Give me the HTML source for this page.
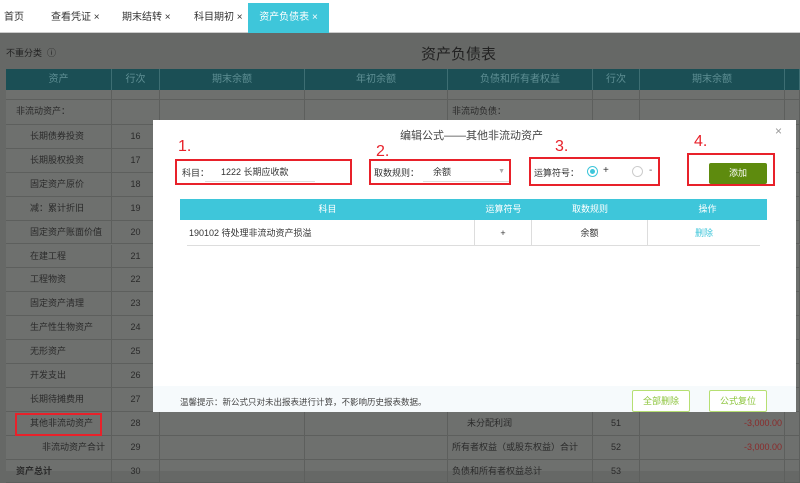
<!DOCTYPE html>
<html><head><meta charset="utf-8"><style>
*{margin:0;padding:0;box-sizing:border-box}
body{width:800px;height:471px;overflow:hidden;position:relative;background:#666866;font-family:"Liberation Sans","Noto Sans CJK SC",sans-serif;font-size:9px;color:#222}
.a{position:absolute}
.tabs{left:0;top:0;width:800px;height:33px;background:#fff;border-bottom:1px solid #ccc}
.tab{position:absolute;top:3px;height:30px;line-height:30px;font-size:10px;color:#333}
.cell{position:absolute;border-right:1px solid #5d5f5d;border-bottom:1px solid #5d5f5d;line-height:23px;font-size:9px;color:#2a2a2a;white-space:nowrap;overflow:hidden}
.hd{position:absolute;top:69px;height:21px;line-height:21px;background:#1b4f55;color:#5f8f94;text-align:center;font-size:10px;border-right:1px solid #3d6e73}
.modal{left:153px;top:120px;width:643px;height:292px;background:#fff}
.red{position:absolute;border:2px solid #e8212a}
.num{position:absolute;color:#e8212a;font-size:16px}
.ith{position:absolute;top:199px;height:21px;line-height:21px;background:#3ec6da;color:#fff;text-align:center;font-size:9px}
.itd{position:absolute;top:220px;height:26px;line-height:26px;border-bottom:1px solid #ddd;border-right:1px solid #ddd;font-size:9px;text-align:center;color:#333}
.btn{position:absolute;top:390px;height:22px;line-height:20px;border:1px solid #b6df72;color:#8cc43c;text-align:center;font-size:9px;border-radius:2px;background:#fff}
</style></head><body>
<div class="a tabs">
<div class="tab" style="left:4px">首页</div>
<div class="tab" style="left:51px">查看凭证 ×</div>
<div class="tab" style="left:122px">期末结转 ×</div>
<div class="tab" style="left:194px">科目期初 ×</div>
<div class="tab" style="left:248px;width:81px;background:#3ec6da;color:#fff;text-align:center;top:3px">资产负债表 ×</div>
</div>
<div class="a" style="left:6px;top:46px;font-size:9px;color:#222">不重分类 &nbsp;ⓘ</div>
<div class="a" style="left:421px;top:43px;font-size:15px;color:#222">资产负债表</div>
<div class="hd" style="left:6px;width:106px">资产</div>
<div class="hd" style="left:112px;width:48px">行次</div>
<div class="hd" style="left:160px;width:145px">期末余额</div>
<div class="hd" style="left:305px;width:143px">年初余额</div>
<div class="hd" style="left:448px;width:145px">负债和所有者权益</div>
<div class="hd" style="left:593px;width:47px">行次</div>
<div class="hd" style="left:640px;width:145px">期末余额</div>
<div class="hd" style="left:785px;width:15px"></div>
<div class="a" style="left:6px;top:90px;width:794px;height:381px;background:#6e706e"></div>
<div id="rows"></div>
<script>
var L=[["",""],["非流动资产：",""],["长期债券投资","16"],["长期股权投资","17"],["固定资产原价","18"],["减：累计折旧","19"],["固定资产账面价值","20"],["在建工程","21"],["工程物资","22"],["固定资产清理","23"],["生产性生物资产","24"],["无形资产","25"],["开发支出","26"],["长期待摊费用","27"],["其他非流动资产","28"],["非流动资产合计","29"],["资产总计","30"]];
var h=23.9,y=125,ys=[90,100],hs=[10,25];for(var i=2;i<L.length;i++){ys.push(y);hs.push(h);y+=h}
var s="";
for(i=0;i<L.length;i++){var t=ys[i],hh=hs[i];var ind=(i==1)?10:(i==15?36:(i==16?10:24));
s+='<div class="cell" style="left:6px;top:'+t+'px;width:106px;height:'+hh+'px;padding-left:'+ind+'px;'+(i==16?'font-weight:bold;':'')+'">'+L[i][0]+'</div>';
s+='<div class="cell" style="left:112px;top:'+t+'px;width:48px;height:'+hh+'px;text-align:center">'+L[i][1]+'</div>';
s+='<div class="cell" style="left:160px;top:'+t+'px;width:145px;height:'+hh+'px"></div>';
s+='<div class="cell" style="left:305px;top:'+t+'px;width:143px;height:'+hh+'px"></div>';
var rl="",rn="",rv="";
if(i==1)rl="非流动负债：";if(i==14){rl="&nbsp;&nbsp;&nbsp;&nbsp;&nbsp;&nbsp;未分配利润";rn="51";rv="-3,000.00"}
if(i==15){rl="所有者权益（或股东权益）合计";rn="52";rv="-3,000.00"}
if(i==16){rl="负债和所有者权益总计";rn="53"}
s+='<div class="cell" style="left:448px;top:'+t+'px;width:145px;height:'+hh+'px;padding-left:4px">'+rl+'</div>';
s+='<div class="cell" style="left:593px;top:'+t+'px;width:47px;height:'+hh+'px;text-align:center">'+rn+'</div>';
s+='<div class="cell" style="left:640px;top:'+t+'px;width:145px;height:'+hh+'px;text-align:right;padding-right:2px;color:#8a2a2a">'+rv+'</div>';
s+='<div class="cell" style="left:785px;top:'+t+'px;width:15px;height:'+hh+'px"></div>';}
document.getElementById("rows").innerHTML=s;
</script>
<div class="red" style="left:15px;top:413px;width:87px;height:23px"></div>
<div class="a modal"></div>
<div class="a" style="left:153px;top:386px;width:643px;height:26px;background:#f6fafc"></div>
<div class="a" style="left:400px;top:127px;font-size:11px;color:#444">编辑公式——其他非流动资产</div>
<div class="a" style="left:775px;top:124px;font-size:12px;color:#999">×</div>
<div class="num" style="left:178px;top:138px">1.</div>
<div class="num" style="left:376px;top:143px">2.</div>
<div class="num" style="left:555px;top:138px">3.</div>
<div class="num" style="left:694px;top:133px">4.</div>
<div class="red" style="left:175px;top:159px;width:177px;height:26px"></div>
<div class="a" style="left:182px;top:166px;font-size:9px;color:#333">科目：</div>
<div class="a" style="left:205px;top:162px;width:110px;height:20px;border-bottom:1px solid #ddd;padding-left:16px;line-height:20px;font-size:9px;color:#333">1222 长期应收款</div>
<div class="red" style="left:369px;top:159px;width:142px;height:26px"></div>
<div class="a" style="left:374px;top:166px;font-size:9px;color:#333">取数规则：</div>
<div class="a" style="left:423px;top:162px;width:86px;height:20px;border-bottom:1px solid #ddd;padding-left:10px;line-height:20px;font-size:9px;color:#333">余额<span style="position:absolute;right:4px;color:#aaa;font-size:7px">▼</span></div>
<div class="red" style="left:529px;top:157px;width:131px;height:29px"></div>
<div class="a" style="left:534px;top:166px;font-size:9px;color:#333">运算符号：</div>
<div class="a" style="left:587px;top:166px;width:11px;height:11px;border:1px solid #3ec6da;border-radius:50%"><div style="position:absolute;left:2px;top:2px;width:5px;height:5px;border-radius:50%;background:#3ec6da"></div></div>
<div class="a" style="left:603px;top:164px;font-size:10px;color:#333;line-height:14px">+</div>
<div class="a" style="left:632px;top:166px;width:11px;height:11px;border:1px solid #ccc;border-radius:50%"></div>
<div class="a" style="left:649px;top:164px;font-size:10px;color:#666;line-height:14px">-</div>
<div class="red" style="left:687px;top:153px;width:88px;height:33px"></div>
<div class="a" style="left:709px;top:163px;width:58px;height:21px;background:#5e8b0e;color:#fff;text-align:center;line-height:21px;font-size:9px;border-radius:2px">添加</div>
<div class="ith" style="left:180px;width:295px">科目</div>
<div class="ith" style="left:475px;width:57px">运算符号</div>
<div class="ith" style="left:532px;width:116px">取数规则</div>
<div class="ith" style="left:648px;width:119px">操作</div>
<div class="itd" style="left:187px;width:288px;text-align:left;padding-left:2px">190102 待处理非流动资产损溢</div>
<div class="itd" style="left:475px;width:57px">+</div>
<div class="itd" style="left:532px;width:116px">余额</div>
<div class="itd" style="left:648px;width:112px;border-right:none;color:#3ec6da">删除</div>
<div class="a" style="left:180px;top:396px;font-size:8.5px;color:#444">温馨提示：新公式只对未出报表进行计算，不影响历史报表数据。</div>
<div class="btn" style="left:632px;width:58px">全部删除</div>
<div class="btn" style="left:709px;width:58px">公式复位</div>
</body></html>
